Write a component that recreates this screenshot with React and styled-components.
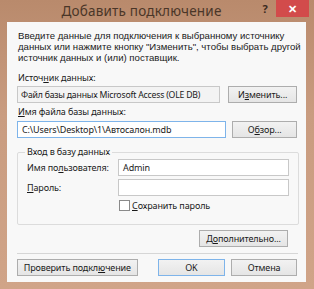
import React from 'react';
import styled, { createGlobalStyle } from 'styled-components';

const Global = createGlobalStyle`
  html, body { margin: 0; padding: 0; }
  body {
    width: 314px;
    height: 289px;
    overflow: hidden;
    font-family: "Noto Sans", "Open Sans", sans-serif;
  }
`

const Frame = styled.div`
  width: 314px;
  height: 289px;
  box-sizing: border-box;
  background: linear-gradient(180deg, #b98a6c 0%, #c99c80 40%, #d0a488 100%);
  padding: 0 8px 7px 7px;
  display: flex;
  flex-direction: column;
`

const TitleBar = styled.div`
  height: 22px;
  display: flex;
  align-items: center;
`

const Title = styled.div`
  flex: 1;
  text-align: center;
  font-size: 13.5px;
  color: #4a3628;
  padding-left: 22px;
  letter-spacing: 0.2px;
`

const Help = styled.div`
  width: 22px;
  font-size: 11px;
  font-weight: bold;
  color: #3a2a20;
  text-align: center;
  margin-top: -6px;
`

const Close = styled.div`
  width: 33px;
  height: 17px;
  margin-top: -5px;
  margin-right: -3px;
  background: #d24b4b;
  color: #fff;
  font-size: 11px;
  font-weight: bold;
  display: flex;
  align-items: center;
  justify-content: center;
`

const Client = styled.div`
  flex: 1;
  background: #f8f8f8;
  padding: 8px 9px 0 10px;
  font-size: 9px;
  letter-spacing: -0.12px;
  color: #1a1a1a;
  display: flex;
  flex-direction: column;
`

const Intro = styled.p`
  margin: 0 0 0 1px;
  line-height: 11px;
  font-family: "Liberation Sans", Arial, sans-serif;
  font-size: 9.6px;
  letter-spacing: 0;
  white-space: nowrap;
`

const Label = styled.div`
  margin-top: ${p => p.$top || 0}px;
  line-height: 12px;
  padding-left: 1px;
`

const Row = styled.div`
  display: flex;
  align-items: center;
  gap: ${p => p.$gap || 8}px;
  margin-top: ${p => p.$top || 0}px;
`

const Field = styled.div`
  box-sizing: border-box;
  height: 17px;
  width: ${p => p.$w}px;
  background: ${p => (p.$ro ? '#f3f3f3' : '#fff')};
  border: 1px solid ${p => (p.$focus ? '#7eb4ea' : '#c8c8c8')};
  padding: 0 ${p => (p.$ro ? 3 : 4)}px;
  font-size: ${p => (p.$ro ? 8.7 : 9)}px;
  letter-spacing: ${p => (p.$ro ? -0.2 : -0.12)}px;
  display: flex;
  align-items: center;
  white-space: nowrap;
  overflow: hidden;
`

const Button = styled.div`
  box-sizing: border-box;
  height: 17px;
  width: ${p => p.$w}px;
  margin-left: ${p => p.$ml || 0}px;
  border: 1px solid ${p => (p.$def ? '#7eb4ea' : '#adadad')};
  background: linear-gradient(180deg, #f2f2f2, #e5e5e5);
  display: flex;
  align-items: center;
  justify-content: center;
  white-space: nowrap;
`

const Group = styled.fieldset`
  margin: 9px 0 0 0;
  padding: 2px 9px 12px 9px;
  border: 1px solid #dcdcdc;
  border-radius: 2px;
  width: 281px;
  box-sizing: border-box;
  display: flex;
  flex-direction: column;
  gap: 3px;
  legend {
    padding: 0 2px;
    margin-left: -2px;
    line-height: 10px;
  }
`

const FormRow = styled.div`
  display: flex;
  align-items: center;
  label {
    width: 91px;
  }
`

const Check = styled.div`
  display: flex;
  align-items: center;
  gap: 2px;
  margin-left: 92px;
  span.box {
    width: 9px;
    height: 9px;
    border: 1px solid #8a8a8a;
    background: #fff;
  }
`

const Right = styled.div`
  display: flex;
  justify-content: flex-end;
  margin-top: 5px;
  padding-right: 9px;
`

const Divider = styled.div`
  height: 1px;
  background: #d6d6d6;
  margin: 6px 0 5px 0;
  width: 281px;
`

const Footer = styled.div`
  display: flex;
  align-items: center;
`

export default () => {
  return (
    <>
      <Global />
      <Frame>
        <TitleBar>
          <Title>Добавить подключение</Title>
          <Help>?</Help>
          <Close>✕</Close>
        </TitleBar>
        <Client>
          <Intro>
            Введите данные для подключения к выбранному источнику<br />
            данных или нажмите кнопку "Изменить", чтобы выбрать другой<br />
            источник данных и (или) поставщик.
          </Intro>

          <Label $top={9}>Источ<u>н</u>ик данных:</Label>
          <Row $top={2} $gap={8}>
            <Field $w={204} $ro>Файл базы данных Microsoft Access (OLE DB)</Field>
            <Button $w={69}>И<u>з</u>менить...</Button>
          </Row>

          <Label $top={3}><u>И</u>мя файла базы данных:</Label>
          <Row $top={3} $gap={6}>
            <Field $w={210} $focus>C:\Users\Desktop\1\Автосалон.mdb</Field>
            <Button $w={65}>О<u>б</u>зор...</Button>
          </Row>

          <Group>
            <legend>Вход в базу данных</legend>
            <FormRow>
              <label>Имя по<u>л</u>ьзователя:</label>
              <Field $w={171}>Admin</Field>
            </FormRow>
            <FormRow>
              <label><u>П</u>ароль:</label>
              <Field $w={171} />
            </FormRow>
            <Check>
              <span className="box" />
              <span><u>С</u>охранить пароль</span>
            </Check>
          </Group>

          <Right>
            <Button $w={89}>Д<u>о</u>полнительно...</Button>
          </Right>

          <Divider />

          <Footer>
            <Button $w={121}>Проверить подкл<u>ю</u>чение</Button>
            <Button $w={68} $ml={20} $def>OK</Button>
            <Button $w={66} $ml={6}>Отмена</Button>
          </Footer>
        </Client>
      </Frame>
    </>
  )
}
